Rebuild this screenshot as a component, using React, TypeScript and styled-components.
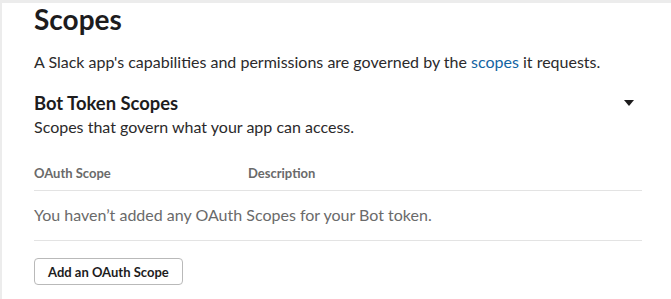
import React from 'react'
import styled, { createGlobalStyle } from 'styled-components'

const Global = createGlobalStyle`
  html, body {
    margin: 0;
    padding: 0;
    background: #ececec;
    font-family: Lato, "Noto Sans", sans-serif;
  }
`

const App = () => {
  return (
    <>
      <Global />
      <Card>
        <Title>Scopes</Title>
        <Lead>
          A Slack app's capabilities and permissions are governed by the <Link>scopes</Link> it requests.
        </Lead>
        <Section>
          <SectionHead>
            <SectionTitle>Bot Token Scopes</SectionTitle>
            <Caret viewBox="0 0 10 6">
              <path d="M0 0h10L5 6z" fill="#1d1c1d" />
            </Caret>
          </SectionHead>
          <SectionSub>Scopes that govern what your app can access.</SectionSub>
        </Section>
        <Table>
          <HeadRow>
            <HeadCell w="214px">OAuth Scope</HeadCell>
            <HeadCell>Description</HeadCell>
          </HeadRow>
          <EmptyRow>You haven’t added any OAuth Scopes for your Bot token.</EmptyRow>
        </Table>
        <Button>Add an OAuth Scope</Button>
      </Card>
    </>
  )
}

export default App

const Card = styled.div`
  margin: 3px 0 0 2px;
  background: #fff;
  height: 296px;
  padding: 0 29px 0 32px;
  box-sizing: border-box;
  color: #1d1c1d;
  overflow: hidden;
`
const Title = styled.h1`
  margin: 0;
  font-size: 28px;
  font-weight: 700;
  line-height: 32px;
`
const Lead = styled.p`
  margin: 16px 0 0;
  font-size: 16px;
  line-height: 22px;
  color: #2b2a2b;
`
const Link = styled.a`
  color: #1264a3;
  text-decoration: none;
`
const Section = styled.div`
  margin-top: 18px;
`
const SectionHead = styled.div`
  display: flex;
  align-items: center;
  justify-content: space-between;
  padding-right: 8px;
`
const SectionTitle = styled.h2`
  margin: 0;
  font-size: 18.4px;
  font-weight: 700;
  line-height: 24px;
`
const Caret = styled.svg`
  width: 10px;
  height: 6px;
`
const SectionSub = styled.p`
  margin: 0;
  font-size: 16px;
  line-height: 24px;
  color: #2b2a2b;
`
const Table = styled.div`
  margin-top: 25px;
`
const HeadRow = styled.div`
  display: flex;
  padding-bottom: 8px;
  border-bottom: 1px solid #e3e3e3;
`
const HeadCell = styled.div<{ w?: string }>`
  width: ${({ w }) => w ?? 'auto'};
  font-size: 13px;
  font-weight: 700;
  color: #6a6a6a;
  line-height: 18px;
`
const EmptyRow = styled.div`
  padding: 13px 0 14px;
  font-size: 16px;
  line-height: 22px;
  color: #6a6a6a;
  border-bottom: 1px solid #e3e3e3;
`
const Button = styled.button`
  margin-top: 17px;
  height: 27px;
  padding: 0 13px;
  border: 1px solid #b9b9b9;
  border-radius: 4px;
  background: #fff;
  font-family: Lato, "Noto Sans", sans-serif;
  font-size: 13px;
  font-weight: 700;
  color: #1d1c1d;
  cursor: pointer;
`
